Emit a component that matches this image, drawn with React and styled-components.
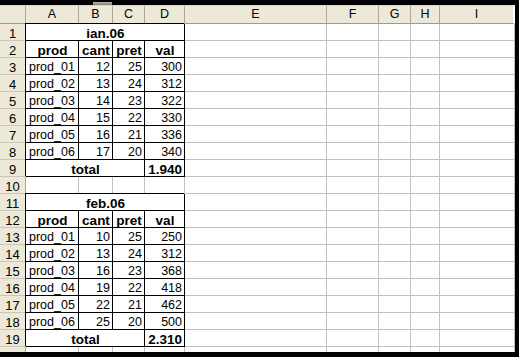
import styled, { createGlobalStyle } from "styled-components";

const GlobalStyle = createGlobalStyle`
  html, body {
    margin: 0;
    padding: 0;
    background: #000;
  }
  body {
    font-family: "Liberation Sans", Arial, sans-serif;
  }
`;

const Frame = styled.div`
  width: 519px;
  height: 357px;
  background: #000;
  display: flex;
  flex-direction: column;
  overflow: hidden;
`;

const TopBand = styled.div`
  height: 5px;
  flex: none;
  display: flex;
  align-items: flex-start;
`;

const Handle = styled.div`
  margin-left: 93px;
  margin-top: 2px;
  width: 19px;
  height: 3px;
  background: linear-gradient(#b8b8b0, #7c7c74);
`;

const Sheet = styled.div`
  width: 515px;
  height: 347px;
  background: #fff;
  overflow: hidden;
  flex: none;
`;

const Grid = styled.div`
  display: grid;
  grid-template-columns: 26px 53px 34px 32px 40px 142px 52px 32px 29px 75px;
  grid-template-rows: 19px;
  grid-auto-rows: 17px;
`;

const HeadCell = styled.div`
  box-sizing: border-box;
  background: #ece9d8;
  border-top: 1px solid #d8d5c4;
  border-right: 1px solid #aca899;
  border-bottom: 1px solid #9d9a8a;
  display: flex;
  align-items: flex-end;
  justify-content: center;
  font-size: 12.5px;
  line-height: 14px;
  padding-bottom: 2px;
  color: #000;
  ${(p) => p.$last && "border-right: 2px solid #fff;"}
`;

const RowNum = styled.div`
  box-sizing: border-box;
  background: #ece9d8;
  border-right: 1px solid #aca899;
  border-bottom: 1px solid #c9c6b6;
  display: flex;
  align-items: flex-end;
  justify-content: center;
  font-size: 13px;
  line-height: 13px;
  color: #000;
`;

const Cell = styled.div`
  box-sizing: border-box;
  grid-column: span ${(p) => p.$span || 1};
  border-right: 1px solid ${(p) => (p.$boxed ? "#000" : "#c0c0c0")};
  border-bottom: 1px solid ${(p) => (p.$boxed ? "#000" : "#c0c0c0")};
  box-shadow: ${(p) => (p.$boxed ? "-1px -1px 0 #000" : "none")};
  display: flex;
  align-items: flex-end;
  justify-content: ${(p) =>
    p.$align === "center" ? "center" : p.$align === "right" ? "flex-end" : "flex-start"};
  padding: 0 2px 0 3px;
  font-size: ${(p) => (p.$bold ? "13.5px" : "12.5px")};
  font-weight: ${(p) => (p.$bold ? 700 : 400)};
  line-height: 13px;
  color: #000;
  white-space: nowrap;
`;

const columns = ["A", "B", "C", "D", "E", "F", "G", "H", "I"];

const months = [
  {
    title: "ian.06",
    total: "1.940",
    items: [
      [12, 25, 300],
      [13, 24, 312],
      [14, 23, 322],
      [15, 22, 330],
      [16, 21, 336],
      [17, 20, 340],
    ],
  },
  {
    title: "feb.06",
    total: "2.310",
    items: [
      [10, 25, 250],
      [13, 24, 312],
      [16, 23, 368],
      [19, 22, 418],
      [22, 21, 462],
      [25, 20, 500],
    ],
  },
];

function tableRows(month) {
  const rows = [];
  rows.push([{ text: month.title, span: 4, bold: true, align: "center", boxed: true }]);
  rows.push(
    ["prod", "cant", "pret", "val"].map((t) => ({ text: t, bold: true, align: "center", boxed: true }))
  );
  month.items.forEach(([cant, pret, val], i) => {
    rows.push([
      { text: `prod_0${i + 1}`, boxed: true },
      { text: cant, align: "right", boxed: true },
      { text: pret, align: "right", boxed: true },
      { text: val, align: "right", boxed: true },
    ]);
  });
  rows.push([
    { text: "total", span: 3, bold: true, align: "center", boxed: true },
    { text: month.total, bold: true, align: "right", boxed: true },
  ]);
  return rows;
}

const emptyTable = [{}, {}, {}, {}];

const sheetRows = [
  ...tableRows(months[0]),
  emptyTable,
  ...tableRows(months[1]),
  emptyTable,
];

export default function App() {
  return (
    <>
      <GlobalStyle />
      <Frame>
        <TopBand>
          <Handle />
        </TopBand>
        <Sheet>
          <Grid>
            <HeadCell />
            {columns.map((c, i) => (
              <HeadCell key={c} $last={i === columns.length - 1}>
                {c}
              </HeadCell>
            ))}
            {sheetRows.map((row, r) => {
              const used = row.reduce((n, c) => n + (c.span || 1), 0);
              const rest = columns.length - used;
              return [
                <RowNum key={`n${r}`}>{r + 1}</RowNum>,
                ...row.map((c, i) => (
                  <Cell
                    key={`c${r}-${i}`}
                    $span={c.span}
                    $bold={c.bold}
                    $align={c.align}
                    $boxed={c.boxed}
                  >
                    {c.text}
                  </Cell>
                )),
                ...Array.from({ length: rest }, (_, i) => <Cell key={`e${r}-${i}`} />),
              ];
            })}
          </Grid>
        </Sheet>
      </Frame>
    </>
  );
}
